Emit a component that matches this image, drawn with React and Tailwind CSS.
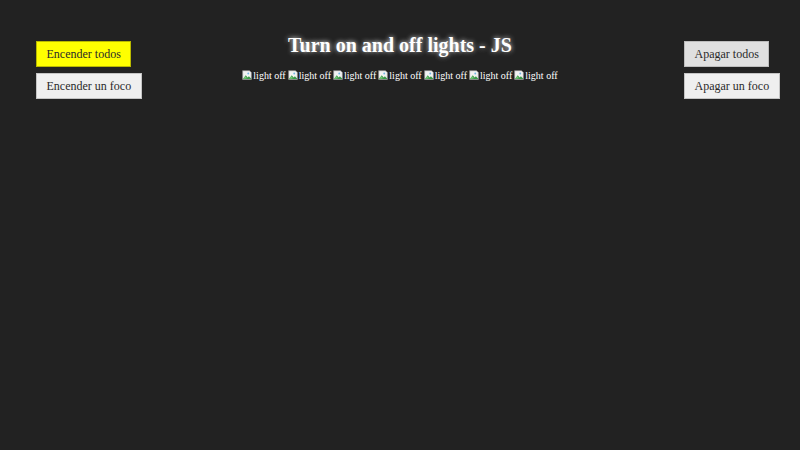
const serif = { fontFamily: '"Liberation Serif", "Times New Roman", serif' };

function BrokenImage() {
  return (
    <span className="inline-flex items-end whitespace-nowrap">
      <svg width="10" height="10" viewBox="0 0 16 16" className="mr-[1px] mb-[0.5px]">
        <path d="M1 1h11l3 3v11H1z" fill="#f2f2f2" stroke="#8a8a8a" strokeWidth="1.2" />
        <path d="M1.5 14.5 L6 8.5 L9 12 L11 10 L14.5 13.5 V14.5 Z" fill="#3a9a48" />
        <path d="M1.5 14.5 L5.5 10 L8 13 Z" fill="#78c878" />
        <circle cx="10" cy="5.5" r="1.5" fill="#6fb6e4" />
      </svg>
      <span>light off</span>
    </span>
  );
}

function Btn({ children, className }) {
  return (
    <button
      className={`h-[26px] px-[9.5px] text-[12px] leading-none whitespace-nowrap text-[#2a2a2a] border ${className}`}
      style={serif}
    >
      {children}
    </button>
  );
}

export default function App() {
  return (
    <div className="w-[800px] h-[450px] bg-[#222222] text-white overflow-hidden" style={serif}>
      <div className="grid grid-cols-[1fr_auto_1fr] items-start pt-[41px] px-[22px]">
        <div className="flex flex-col gap-[6px] items-start pl-[14px]">
          <Btn className="bg-[#ffff00] border-[#b9b900]">Encender todos</Btn>
          <Btn className="bg-[#efefef] border-[#c4c4c4]">Encender un foco</Btn>
        </div>
        <div className="flex flex-col items-center mt-[-6px]">
          <h1 className="text-[20px] font-bold leading-[20px] [text-shadow:0_0_5px_#ffffff,0_2px_3px_#000000]">
            Turn on and off lights - JS
          </h1>
          <div className="mt-[15px] flex gap-[2px] text-[10px] leading-[10px]">
            {Array.from({ length: 7 }).map((_, i) => (
              <BrokenImage key={i} />
            ))}
          </div>
        </div>
        <div className="flex flex-col gap-[6px] items-start justify-self-end w-[94px]">
          <Btn className="bg-[#e0e0e0] border-[#bdbdbd]">Apagar todos</Btn>
          <Btn className="bg-[#efefef] border-[#c4c4c4]">Apagar un foco</Btn>
        </div>
      </div>
    </div>
  );
}
